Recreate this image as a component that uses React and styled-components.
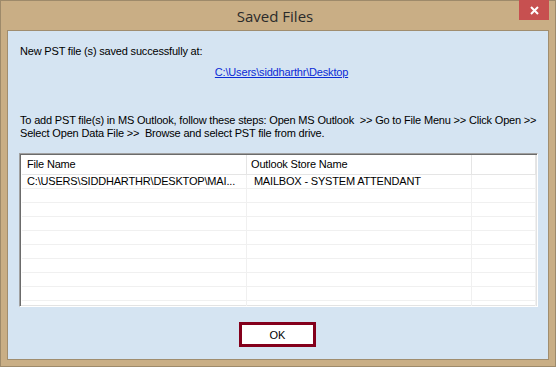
import React from "react";
import styled, { createGlobalStyle } from "styled-components";

const GlobalStyle = createGlobalStyle`
  html, body {
    margin: 0;
    padding: 0;
    background: #c8ad84;
  }
  #root {
    width: 556px;
    height: 367px;
  }
`;

const Window = styled.div`
  box-sizing: border-box;
  width: 556px;
  height: 367px;
  display: flex;
  flex-direction: column;
  background: #c9ae85;
  border: 1px solid #9e8a6a;
  font-family: "Liberation Sans", Arial, sans-serif;
`;

const TitleBar = styled.div`
  height: 29px;
  display: grid;
  grid-template-columns: 1fr auto 1fr;
  align-items: start;
  padding-right: 6px;
`;

const Title = styled.div`
  grid-column: 2;
  padding-top: 5px;
  font-family: "Open Sans", "Noto Sans", sans-serif;
  font-size: 15px;
  line-height: 20px;
  color: #2b2b2b;
`;

const CloseButton = styled.div`
  grid-column: 3;
  justify-self: end;
  width: 30px;
  height: 20px;
  margin-top: -1px;
  background: #c75050;
  display: flex;
  align-items: center;
  justify-content: center;
`;

const Client = styled.div`
  box-sizing: border-box;
  flex: 1;
  margin: 0 6px 6px 6px;
  border: 1px solid #a08d6f;
  background: #d5e4f2;
  padding: 14px 10px 0 11px;
  display: flex;
  flex-direction: column;
  font-size: 11px;
  letter-spacing: -0.18px;
  color: #000;
`;

const Message = styled.div`
  padding-left: 1px;
  line-height: 13px;
  white-space: pre;
  margin-top: ${p => p.$top || 0}px;
`;

const PathLink = styled.a`
  align-self: center;
  margin-top: 8px;
  margin-left: 6px;
  line-height: 13px;
  color: #0b2bd6;
  text-decoration: underline;
  cursor: pointer;
`;

const List = styled.div`
  box-sizing: border-box;
  margin-top: 13px;
  width: 519px;
  height: 154px;
  background: #fff;
  border-top: 1px solid #a0a0a0;
  border-left: 1px solid #a0a0a0;
  border-right: 1px solid #fff;
  border-bottom: 1px solid #fff;
  box-shadow: inset 1px 1px 0 #6b6b6b, inset -1px -1px 0 #e3e3e3;
  overflow: hidden;
  padding: 1px 1px 0 2px;
`;

const Row = styled.div`
  display: grid;
  grid-template-columns: 225px 225px 1fr;
  height: ${p => (p.$header ? 20 : 14)}px;
  border-bottom: 1px solid ${p => (p.$header ? "#e5e5e5" : "#f0f0f0")};
  box-sizing: border-box;
  line-height: ${p => (p.$header ? 19 : 13)}px;
`;

const Cell = styled.div`
  padding-left: ${p => (p.$first ? 5 : 4)}px;
  border-right: 1px solid ${p => (p.$header ? "#e5e5e5" : "#f0f0f0")};
  white-space: pre;
  overflow: hidden;
  color: #000;
`;

const Footer = styled.div`
  display: flex;
  justify-content: center;
  padding-top: 15px;
  padding-right: 2px;
`;

const OkButton = styled.button`
  box-sizing: border-box;
  width: 77px;
  height: 25px;
  background: #fff;
  border: 3px solid #84001c;
  font-family: "Liberation Sans", Arial, sans-serif;
  font-size: 11px;
  color: #000;
  padding: 0;
  cursor: pointer;
`;

const rows = [
  ["C:\\USERS\\SIDDHARTHR\\DESKTOP\\MAI...", " MAILBOX - SYSTEM ATTENDANT"],
  ["", ""], ["", ""], ["", ""], ["", ""], ["", ""], ["", ""], ["", ""], ["", ""], ["", ""],
];

export default function App() {
  return (
    <>
      <GlobalStyle />
      <Window>
        <TitleBar>
          <Title>Saved Files</Title>
          <CloseButton>
            <svg width="9" height="9" viewBox="0 0 9 9">
              <path d="M1 1 L8 8 M8 1 L1 8" stroke="#fff" strokeWidth="2" />
            </svg>
          </CloseButton>
        </TitleBar>
        <Client>
          <Message>New PST file (s) saved successfully at:</Message>
          <PathLink>C:\Users\siddharthr\Desktop</PathLink>
          <Message $top={35}>
            {"To add PST file(s) in MS Outlook, follow these steps: Open MS Outlook  >> Go to File Menu >> Click Open >>\nSelect Open Data File >>  Browse and select PST file from drive."}
          </Message>
          <List>
            <Row $header>
              <Cell $header $first>File Name</Cell>
              <Cell $header>Outlook Store Name</Cell>
              <Cell $header />
            </Row>
            {rows.map((r, i) => (
              <Row key={`row_${i}`}>
                <Cell $first>{r[0]}</Cell>
                <Cell>{r[1]}</Cell>
                <Cell />
              </Row>
            ))}
          </List>
          <Footer>
            <OkButton>OK</OkButton>
          </Footer>
        </Client>
      </Window>
    </>
  );
}
